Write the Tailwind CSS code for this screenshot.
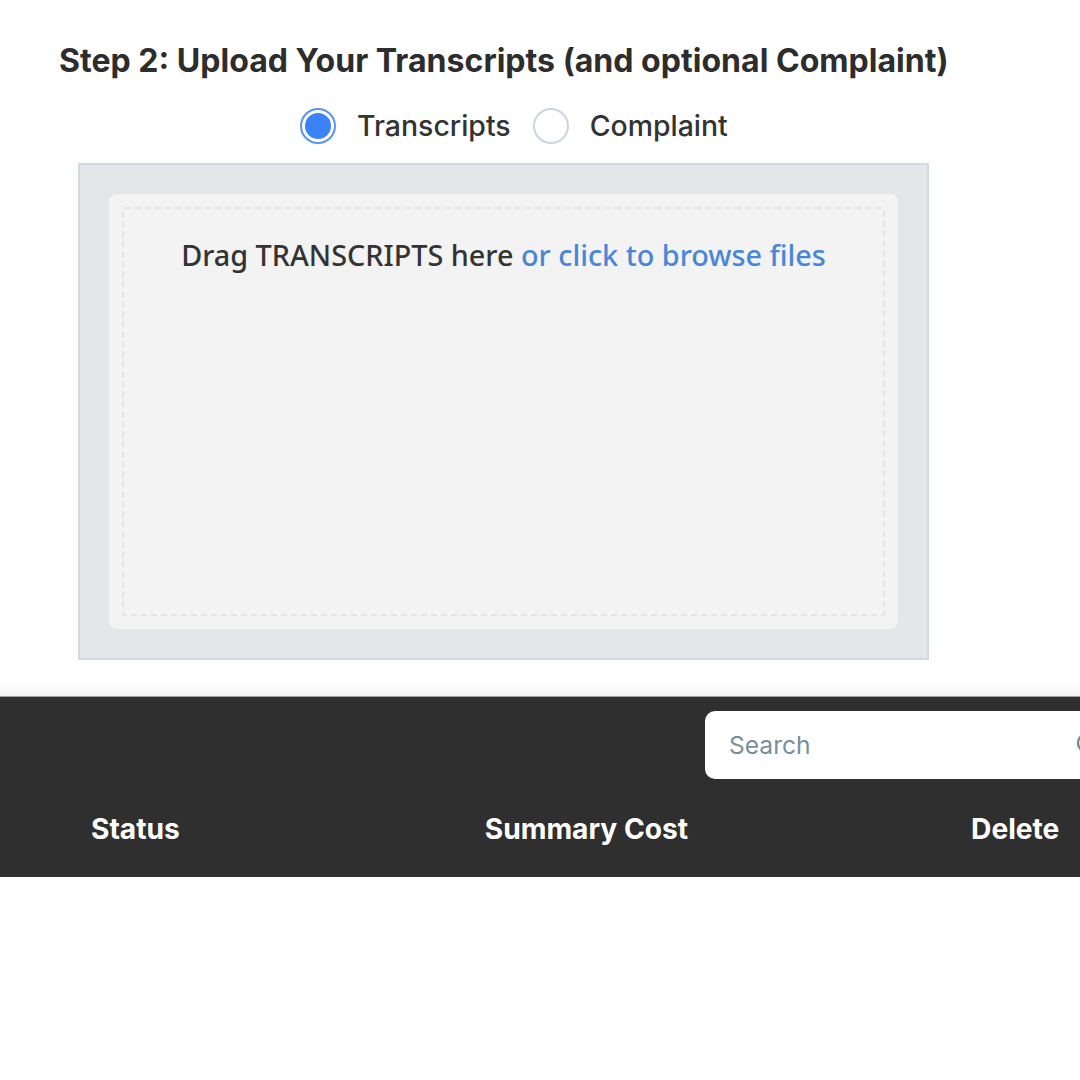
<!DOCTYPE html>
<html>
<head>
<meta charset="utf-8">
<script src="https://cdn.jsdelivr.net/npm/@tailwindcss/browser@4"></script>
</head>
<body class="bg-white">
<div class="w-[1080px] h-[1080px] overflow-hidden font-['Inter',sans-serif] bg-white">
  <div class="h-[696px] pt-[42px] bg-gradient-to-b from-white from-[98%] to-[#f4f4f4]">
    <h2 class="ml-[59px] h-[38px] leading-[38px] text-[32.07px] font-bold text-[#2d2d2d] whitespace-nowrap">Step 2: Upload Your Transcripts (and optional Complaint)</h2>
    <div class="ml-[300px] mt-[28px] h-[36px] flex items-center text-[#333] text-[28.45px] font-medium">
      <span class="w-[36px] h-[36px] rounded-full border-2 border-[#5b93f5] bg-white flex items-center justify-center shrink-0"><span class="w-[26px] h-[26px] rounded-full bg-[#3b82f6]"></span></span>
      <span class="ml-[21px] pt-[1px]">Transcripts</span>
      <span class="ml-[22px] w-[36px] h-[36px] rounded-full border-2 border-[#cbd5e1] bg-white shrink-0"></span>
      <span class="ml-[21px] pt-[1px]">Complaint</span>
    </div>
    <div class="ml-[78px] mt-[19px] w-[851px] h-[497px] border-2 border-[#d0dae6] bg-[#e4e6ea] p-[29px]">
      <div class="h-full rounded-[8px] bg-[#f3f3f3] p-[13px]">
        <div class="h-full border-2 border-dashed border-[#e3e4e6] rounded-[3px] pt-[26px] text-center text-[28.8px] leading-[40px] text-[#333] font-medium font-['Noto_Sans',sans-serif]">
          Drag TRANSCRIPTS here <span class="text-[#4a86d8]">or click to browse files</span>
        </div>
      </div>
    </div>
  </div>
  <div class="h-[181px] bg-[#2f2f2f] border-t border-[#a3a3a3]">
    <div class="pt-[14px] pl-[705px]">
      <div class="w-[500px] h-[68px] rounded-[10px] bg-white flex items-center pl-[24px] text-[24.6px] text-[#7a8f99]">
        <span class="w-[345px] pt-[1px]">Search</span>
        <svg width="30" height="30" viewBox="0 0 30 30" fill="none" stroke="#6f8f9e" stroke-width="2.5"><circle cx="13" cy="13" r="9"/><path d="M20 20l6 6"/></svg>
      </div>
    </div>
    <div class="mt-[30px] h-[40px] flex items-center text-white text-[28.15px] font-bold whitespace-nowrap">
      <span class="ml-[91px]">Status</span>
      <span class="ml-[305px]">Summary Cost</span>
      <span class="ml-[283px]">Delete</span>
    </div>
  </div>
</div>
</body>
</html>
